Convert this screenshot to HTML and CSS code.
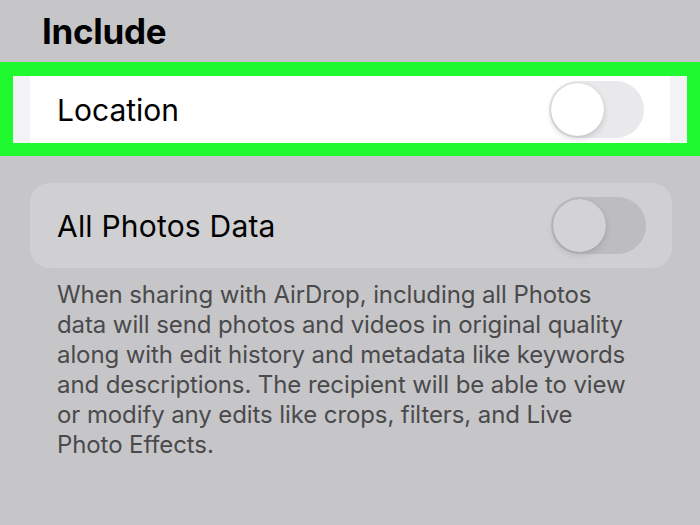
FILE: index.html
```html
<!DOCTYPE html>
<html>
<head>
<meta charset="utf-8">
<link rel="stylesheet" href="styles.css">
</head>
<body>
<div class="page">
  <h1 class="title">Include</h1>
  <div class="highlight">
    <div class="group-bg">
      <div class="row row-white">
        <span class="label">Location</span>
        <span class="toggle toggle-light"><span class="knob"></span></span>
      </div>
    </div>
  </div>
  <div class="card">
    <span class="label">All Photos Data</span>
    <span class="toggle toggle-dim"><span class="knob"></span></span>
  </div>
  <p class="desc">When sharing with AirDrop, including all Photos data will send photos and videos in original quality along with edit history and metadata like keywords and descriptions. The recipient will be able to view or modify any edits like crops, filters, and Live Photo Effects.</p>
</div>
</body>
</html>
```
FILE: styles.css
```css
html, body {
  margin: 0;
  padding: 0;
  background: #c6c6c8;
}
.page {
  width: 700px;
  height: 525px;
  overflow: hidden;
  font-family: Inter, "Liberation Sans", sans-serif;
  color: #000;
}
.title {
  margin: 0;
  padding: 10px 0 0 42px;
  height: 62px;
  box-sizing: border-box;
  font-size: 35px;
  font-weight: 700;
  line-height: 42px;
  letter-spacing: -0.3px;
}
.highlight {
  border: 14px solid #1ff92f;
  border-left-width: 13px;
  border-right-width: 13px;
  border-bottom-width: 13px;
  height: 67px;
}
.group-bg {
  background: #f3f3f5;
  height: 100%;
  padding: 0 17px;
}
.row {
  display: flex;
  align-items: center;
  justify-content: space-between;
  height: 100%;
  padding: 0 26px 0 27px;
}
.row-white {
  background: #ffffff;
}
.label {
  font-size: 30px;
  letter-spacing: 0;
  font-weight: 400;
}
.card .label {
  letter-spacing: 0.2px;
}
.toggle {
  width: 95px;
  height: 57px;
  border-radius: 29px;
  display: flex;
  align-items: center;
  padding: 0 2px;
  box-sizing: border-box;
}
.toggle-light {
  background: #e9e9eb;
}
.toggle-dim {
  background: #bdbdbf;
}
.knob {
  width: 53px;
  height: 53px;
  border-radius: 50%;
  background: #fff;
  box-shadow: 0 3px 6px rgba(0,0,0,0.15), 0 0 1px rgba(0,0,0,0.2);
}
.toggle-dim .knob {
  background: #d3d3d5;
  box-shadow: 0 3px 6px rgba(0,0,0,0.12), 0 0 1px rgba(0,0,0,0.2);
}
.card {
  margin: 27px 28px 0 30px;
  height: 85px;
  border-radius: 20px;
  background: #d0d0d2;
  display: flex;
  align-items: center;
  justify-content: space-between;
  padding: 0 26px 0 27px;
}
.desc {
  margin: 12px 60px 0 57px;
  font-size: 24px;
  line-height: 30px;
  color: #4a4a4c;
  letter-spacing: -0.1px;
}
```
